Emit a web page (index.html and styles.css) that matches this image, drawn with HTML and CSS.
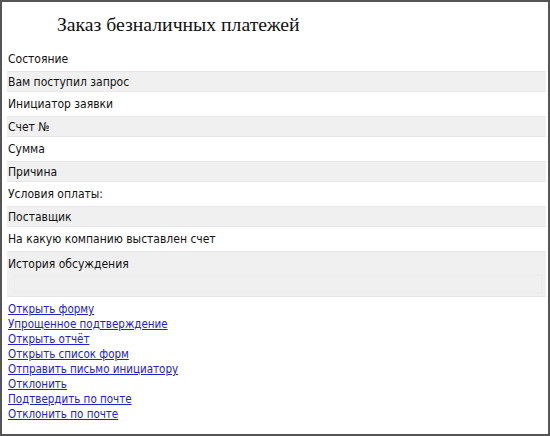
FILE: index.html
```html
<!DOCTYPE html>
<html>
  <head>
    <meta charset="utf-8">
    <title>Заказ безналичных платежей</title>
    <link rel="stylesheet" href="styles.css">
  </head>
  <body>
    <div class="frame">
      <h1 class="title">Заказ безналичных платежей</h1>
      <section class="fields">
        <div class="row">Состояние</div>
        <div class="row alt">Вам поступил запрос</div>
        <div class="row">Инициатор заявки</div>
        <div class="row alt">Счет №</div>
        <div class="row">Сумма</div>
        <div class="row alt">Причина</div>
        <div class="row">Условия оплаты:</div>
        <div class="row alt">Поставщик</div>
        <div class="row">На какую компанию выставлен счет</div>
        <div class="row alt history">
          <span>История обсуждения</span>
          <div class="historyBox"></div>
        </div>
      </section>
      <ul class="actions">
        <li><a href="#">Открыть форму</a></li>
        <li><a href="#">Упрощенное подтверждение</a></li>
        <li><a href="#">Открыть отчёт</a></li>
        <li><a href="#">Открыть список форм</a></li>
        <li><a href="#">Отправить письмо инициатору</a></li>
        <li><a href="#">Отклонить</a></li>
        <li><a href="#">Подтвердить по почте</a></li>
        <li><a href="#">Отклонить по почте</a></li>
      </ul>
    </div>
  </body>
</html>
```
FILE: styles.css
```css
body {
    margin: 0;
}
.frame {
    box-sizing: border-box;
    width: 550px;
    height: 436px;
    border: 2px solid #555;
    padding: 0 2px 0 5px;
    font-family: "DejaVu Sans Condensed", "DejaVu Sans", Tahoma, sans-serif;
    font-size: 12px;
    color: #111;
}
.title {
    margin: 0;
    padding: 11px 0 0 50px;
    height: 34px;
    font-family: "Liberation Serif", "Times New Roman", serif;
    font-size: 19.7px;
    font-weight: normal;
}
.fields {
    display: flex;
    flex-direction: column;
}
.row {
    box-sizing: border-box;
    height: 24px;
    padding-left: 1px;
    display: flex;
    align-items: center;
}
.alt {
    height: 21px;
    background: #f0f0f0;
    border-top: 1px solid #e8e8e8;
    border-bottom: 1px solid #e8e8e8;
}
.history {
    height: 46px;
    flex-direction: column;
    align-items: stretch;
    padding-top: 5px;
}
.historyBox {
    margin: 4px 4px 0 6px;
    height: 16px;
    border: 1px solid #ebebeb;
}
.actions {
    list-style: none;
    margin: 0;
    padding: 5px 0 0 1px;
    font-size: 11.5px;
    line-height: 15px;
}
.actions a {
    color: #2222cc;
}
```
